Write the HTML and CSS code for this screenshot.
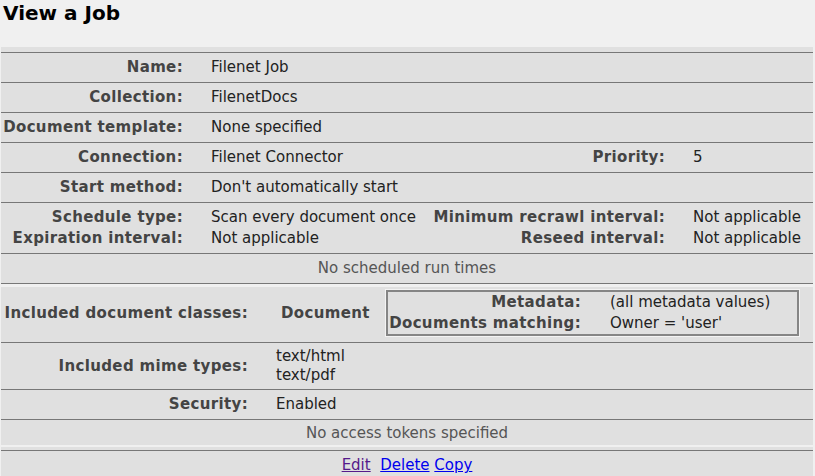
FILE: index.html
```html
<!DOCTYPE html>
<html lang="en">
<head>
<meta charset="utf-8">
<title>View a Job</title>
<link rel="stylesheet" href="styles.css">
</head>
<body>
<h1 class="title">View a Job</h1>

<div class="panel panel-main">
  <div class="row grid4">
    <div class="lbl">Name:</div><div class="val wide">Filenet Job</div>
  </div>
  <div class="row grid4">
    <div class="lbl">Collection:</div><div class="val wide">FilenetDocs</div>
  </div>
  <div class="row grid4">
    <div class="lbl">Document template:</div><div class="val wide">None specified</div>
  </div>
  <div class="row grid4">
    <div class="lbl">Connection:</div><div class="val">Filenet Connector</div>
    <div class="lbl">Priority:</div><div class="val">5</div>
  </div>
  <div class="row grid4">
    <div class="lbl">Start method:</div><div class="val wide">Don't automatically start</div>
  </div>
  <div class="row grid4 double">
    <div class="lbl">Schedule type:</div><div class="val">Scan every document once</div>
    <div class="lbl">Minimum recrawl interval:</div><div class="val">Not applicable</div>
    <div class="lbl">Expiration interval:</div><div class="val">Not applicable</div>
    <div class="lbl">Reseed interval:</div><div class="val">Not applicable</div>
  </div>
  <div class="row note last">No scheduled run times</div>
</div>

<div class="panel panel-spec">
  <div class="row grid2 classes">
    <div class="lbl">Included document classes:</div>
    <div class="classcell">
      <div class="docname">Document</div>
      <div class="box">
        <div class="blbl">Metadata:</div><div class="bval">(all metadata values)</div>
        <div class="blbl">Documents matching:</div><div class="bval">Owner = 'user'</div>
      </div>
    </div>
  </div>
  <div class="row grid2 sep">
    <div class="lbl">Included mime types:</div>
    <div class="val multi"><div>text/html</div><div>text/pdf</div></div>
  </div>
  <div class="row grid2 sep">
    <div class="lbl">Security:</div><div class="val">Enabled</div>
  </div>
  <div class="row note sep short">No access tokens specified</div>
</div>

<div class="panel panel-actions">
  <div class="row links">
    <a href="#edit" class="visited">Edit</a>&nbsp;&nbsp;<a href="#delete">Delete</a>&nbsp;<a href="#copy">Copy</a>
  </div>
</div>
</body>
</html>
```

FILE: styles.css
```css
html, body {
  margin: 0;
  padding: 0;
  background: #f0f0f0;
  font-family: "DejaVu Sans", Verdana, sans-serif;
  font-size: 15px;
  color: #222;
}

.title {
  margin: 2px 0 22px 3px;
  font-size: 20px;
  line-height: 23px;
  font-weight: bold;
  color: #000;
}

.panel {
  background: #e0e0e0;
  margin: 0 2px 0 1px;
}

.panel-main {
  padding-top: 5px;
}

.panel-spec {
  margin-top: 3px;
}

.panel-actions {
  margin-top: 2px;
  padding-top: 3px;
}

.row {
  line-height: 17px;
}

.panel-main .row {
  border-top: 1px solid #777;
}

.panel-main .row.last {
  border-bottom: 1px solid #777;
}

.sep {
  border-top: 1px solid #777;
}

.grid4 {
  display: grid;
  grid-template-columns: 190px 240px 242px 1fr;
  align-items: center;
  padding: 6px 0;
}

.grid4.double {
  padding: 4px 0;
}

.grid4.double > div {
  padding-top: 2px;
  padding-bottom: 2px;
}

.grid2 {
  display: grid;
  grid-template-columns: 255px 1fr;
  align-items: center;
  padding: 6px 0;
}

.lbl {
  text-align: right;
  padding-right: 8px;
  font-weight: bold;
  letter-spacing: 0.35px;
  color: #444;
  white-space: nowrap;
}

.val {
  padding-left: 20px;
  color: #222;
  white-space: nowrap;
}

.val.wide {
  grid-column: 2 / 5;
}

.val.multi {
  line-height: 19px;
}

.grid2.sep:nth-child(2) {
  padding: 4px 0;
}

.note {
  text-align: center;
  color: #555;
  padding: 6px 0;
}

.note.short {
  padding: 5px 0 3px;
}

.classes {
  padding: 2px 0 5px;
}

.classcell {
  display: flex;
  align-items: center;
}

.docname {
  width: 105px;
  padding-left: 25px;
  font-weight: bold;
  letter-spacing: 0.35px;
  color: #444;
}

.box {
  width: 409px;
  border: 2px solid #858585;
  box-shadow: 0 0 0 1px #f3f3f3;
  display: grid;
  grid-template-columns: 201px 1fr;
  margin: 1px 0;
}

.blbl {
  text-align: right;
  padding: 2px 8px 2px 0;
  font-weight: bold;
  letter-spacing: 0.35px;
  color: #444;
  white-space: nowrap;
}

.bval {
  padding: 2px 0 2px 21px;
  color: #222;
  white-space: nowrap;
}

.links {
  border-top: 1px solid #777;
  text-align: center;
  padding: 6px 0;
}

.links a {
  color: #0000ee;
  text-decoration: underline;
}

.links a.visited {
  color: #551a8b;
}
```
